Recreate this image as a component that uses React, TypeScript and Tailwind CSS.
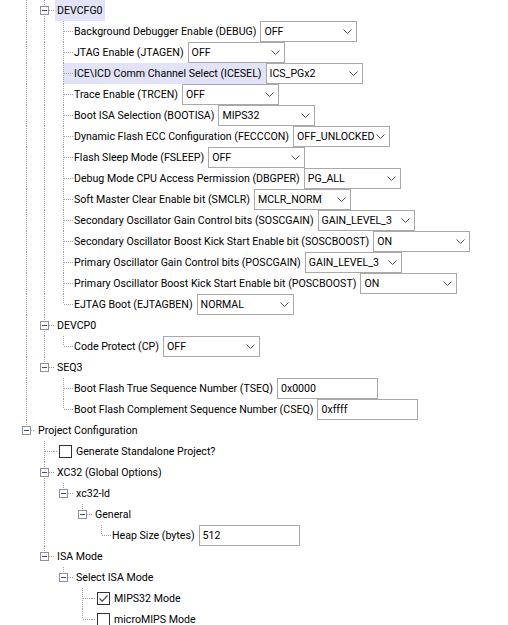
import React from "react";

type Row = {
  label: string;
  depth: number;
  last?: boolean;
  hl?: boolean;
  kind: "group" | "select" | "text" | "check";
  value?: string;
  checked?: boolean;
};

const rows: Row[] = [
  { label: "DEVCFG0", depth: 1, kind: "group", hl: true },
  { label: "Background Debugger Enable (DEBUG)", depth: 2, kind: "select", value: "OFF" },
  { label: "JTAG Enable (JTAGEN)", depth: 2, kind: "select", value: "OFF" },
  { label: "ICE\\ICD Comm Channel Select (ICESEL)", depth: 2, kind: "select", value: "ICS_PGx2", hl: true },
  { label: "Trace Enable (TRCEN)", depth: 2, kind: "select", value: "OFF" },
  { label: "Boot ISA Selection (BOOTISA)", depth: 2, kind: "select", value: "MIPS32" },
  { label: "Dynamic Flash ECC Configuration (FECCCON)", depth: 2, kind: "select", value: "OFF_UNLOCKED" },
  { label: "Flash Sleep Mode (FSLEEP)", depth: 2, kind: "select", value: "OFF" },
  { label: "Debug Mode CPU Access Permission (DBGPER)", depth: 2, kind: "select", value: "PG_ALL" },
  { label: "Soft Master Clear Enable bit (SMCLR)", depth: 2, kind: "select", value: "MCLR_NORM" },
  { label: "Secondary Oscillator Gain Control bits (SOSCGAIN)", depth: 2, kind: "select", value: "GAIN_LEVEL_3" },
  { label: "Secondary Oscillator Boost Kick Start Enable bit (SOSCBOOST)", depth: 2, kind: "select", value: "ON" },
  { label: "Primary Oscillator Gain Control bits (POSCGAIN)", depth: 2, kind: "select", value: "GAIN_LEVEL_3" },
  { label: "Primary Oscillator Boost Kick Start Enable bit (POSCBOOST)", depth: 2, kind: "select", value: "ON" },
  { label: "EJTAG Boot (EJTAGBEN)", depth: 2, kind: "select", value: "NORMAL", last: true },
  { label: "DEVCP0", depth: 1, kind: "group" },
  { label: "Code Protect (CP)", depth: 2, kind: "select", value: "OFF", last: true },
  { label: "SEQ3", depth: 1, kind: "group", last: true },
  { label: "Boot Flash True Sequence Number (TSEQ)", depth: 2, kind: "text", value: "0x0000" },
  { label: "Boot Flash Complement Sequence Number (CSEQ)", depth: 2, kind: "text", value: "0xffff", last: true },
  { label: "Project Configuration", depth: 0, kind: "group", last: true },
  { label: "Generate Standalone Project?", depth: 1, kind: "check", checked: false },
  { label: "XC32 (Global Options)", depth: 1, kind: "group" },
  { label: "xc32-ld", depth: 2, kind: "group", last: true },
  { label: "General", depth: 3, kind: "group", last: true },
  { label: "Heap Size (bytes)", depth: 4, kind: "text", value: "512", last: true },
  { label: "ISA Mode", depth: 1, kind: "group", last: true },
  { label: "Select ISA Mode", depth: 2, kind: "group", last: true },
  { label: "MIPS32 Mode", depth: 3, kind: "check", checked: true },
  { label: "microMIPS Mode", depth: 3, kind: "check", checked: false, last: true },
];

// tree indent widths, connector line sits 9px into each cell
const CELL = [18, 19, 19, 19, 19];
const LINE = "#a0a0a0";

function Guide({ w }: { w: number }) {
  return (
    <svg width={w} height={21} className="shrink-0 block">
      <line x1={9.5} y1={0} x2={9.5} y2={21} stroke={LINE} strokeDasharray="1 1" />
    </svg>
  );
}

function Joint({ w, last, box, hl }: { w: number; last?: boolean; box?: boolean; hl?: boolean }) {
  return (
    <svg width={w} height={21} className="shrink-0 block">
      {hl && <rect x={9} y={0} width={w - 9} height={21} fill="#e3e3f8" />}
      <line x1={9.5} y1={0} x2={9.5} y2={last ? 10 : 21} stroke={LINE} strokeDasharray="1 1" />
      <line x1={box ? 14 : 10} y1={10.5} x2={w} y2={10.5} stroke={LINE} strokeDasharray="1 1" />
      {box && (
        <>
          <rect x={5.5} y={6.5} width={8} height={8} fill="#fff" stroke="#919191" />
          <line x1={7} y1={10.5} x2={12} y2={10.5} stroke="#2f4f86" />
        </>
      )}
    </svg>
  );
}

function Select({ value }: { value: string }) {
  return (
    <div className="h-[21px] w-[97px] border border-[#a9a9a9] bg-white flex items-center justify-between pl-[3px] pr-[4px] shrink-0">
      <span>{value}</span>
      <svg width={9} height={5} className="block shrink-0">
        <path d="M0.5 0.5 L4.5 4.5 L8.5 0.5" fill="none" stroke="#505050" />
      </svg>
    </div>
  );
}

function TextBox({ value }: { value: string }) {
  return (
    <div className="h-[21px] w-[101px] border border-[#a9a9a9] bg-white flex items-center pl-[3px] shrink-0">
      {value}
    </div>
  );
}

function CheckBox({ checked }: { checked?: boolean }) {
  return (
    <div className="w-[13px] h-[13px] border border-[#333333] bg-white ml-[1px] shrink-0 flex items-center justify-center">
      {checked && (
        <svg width={11} height={11} className="block">
          <path d="M1.5 5.5 L4.2 8.2 L9.5 2.5" fill="none" stroke="#4a4a4a" strokeWidth={1.2} />
        </svg>
      )}
    </div>
  );
}

export default function App() {
  const open: boolean[] = [true];
  const lines = rows.map((r) => {
    const guides = open.slice(0, r.depth);
    open[r.depth] = !r.last;
    open.length = r.depth + 1;
    return guides;
  });

  return (
    <div className="w-[508px] h-[625px] overflow-hidden bg-white text-black font-['Roboto',sans-serif] text-[10.6px]">
      <div className="pl-[17px]">
        {rows.map((r, i) => (
          <div key={i} className="h-[21px] flex items-center whitespace-nowrap">
            {lines[i].map((g, l) =>
              g ? <Guide key={l} w={CELL[l]} /> : <div key={l} style={{ width: CELL[l] }} className="shrink-0" />
            )}
            <Joint w={CELL[r.depth]} last={r.last} box={r.kind === "group"} hl={r.hl && r.kind !== "group"} />
            {r.kind === "group" && (
              <span className={`ml-[1px] px-[2px] h-[21px] flex items-center ${r.hl ? "bg-[#e3e3f8]" : ""}`}>
                {r.label}
              </span>
            )}
            {(r.kind === "select" || r.kind === "text") && (
              <>
                <span className={`pl-[1px] pr-[4px] h-[21px] flex items-center ${r.hl ? "bg-[#e3e3f8]" : ""}`}>
                  {r.label}
                </span>
                {r.kind === "select" ? <Select value={r.value!} /> : <TextBox value={r.value!} />}
              </>
            )}
            {r.kind === "check" && (
              <>
                <svg width={4} height={21} className="shrink-0 block">
                  <line x1={0} y1={10.5} x2={4} y2={10.5} stroke={LINE} strokeDasharray="1 1" />
                </svg>
                <CheckBox checked={r.checked} />
                <span className="ml-[4px]">{r.label}</span>
              </>
            )}
          </div>
        ))}
      </div>
    </div>
  );
}
